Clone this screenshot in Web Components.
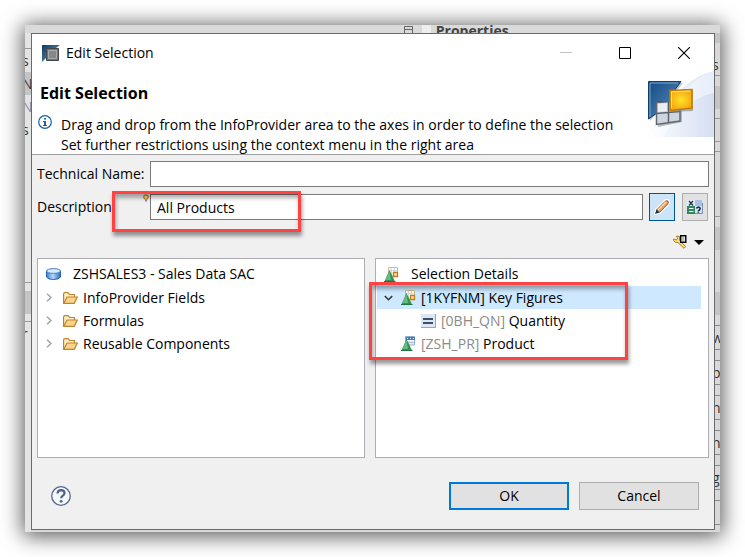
<!DOCTYPE html>
<html lang="en">
<head>
<meta charset="utf-8">
<meta name="viewport" content="width=device-width, initial-scale=1">
<title>Edit Selection</title>
<style>
  body {
    margin: 0;
    background: #fff;
    color: #000;
    font: 14px/20px "Open Sans", "Noto Sans", sans-serif;
  }
</style>
</head>
<body>
<app-frame>
  <edit-dialog heading="Edit Selection">
    <dialog-banner slot="banner" heading="Edit Selection">
      Drag and drop from the InfoProvider area to the axes in order to define the selection<br>
      Set further restrictions using the context menu in the right area
    </dialog-banner>
    <text-field label="Technical Name:"></text-field>
    <text-field label="Description:" value="All Products" hint marked>
      <icon-button icon="pencil" label="Edit text" active></icon-button>
      <icon-button icon="variable" label="Text variable"></icon-button>
    </text-field>
    <tree-tools></tree-tools>
    <split-panes>
      <tree-panel heading="ZSHSALES3 - Sales Data SAC" icon="database">
        <tree-row icon="folder" toggle="closed">InfoProvider Fields</tree-row>
        <tree-row icon="folder" toggle="closed">Formulas</tree-row>
        <tree-row icon="folder" toggle="closed">Reusable Components</tree-row>
      </tree-panel>
      <tree-panel heading="Selection Details" icon="figures" marked>
        <tree-row icon="figures" toggle="open" selected>[1KYFNM] Key Figures</tree-row>
        <tree-row icon="equals" key="[0BH_QN]" level="2">Quantity</tree-row>
        <tree-row icon="product" key="[ZSH_PR]">Product</tree-row>
      </tree-panel>
    </split-panes>
  </edit-dialog>
</app-frame>

<script>
const ICONS = {
  app: [18, 18, `
    <defs><linearGradient id="a" x2="1" y2="1"><stop stop-color="#0d3c66"/><stop offset="1" stop-color="#6d9cc4"/></linearGradient></defs>
    <path d="M0 1H18L14 4V15L4 14L0 18Z" fill="url(#a)"/>
    <path d="M4.500 4.500H16.500V16.500H4.500Z" fill="#707478" stroke="#43474b"/>
    <path d="M6.500 6.500H14.500V14.500H6.500Z" fill="#85888b" stroke="#a9acae"/>`],
  info: [14, 14, `
    <circle cx="7" cy="7" r="6.3" fill="#fff" stroke="#1c5fa3" stroke-width="1.2"/>
    <path d="M6 3H8V4.6H6ZM5 6H8V10H9V11H5V10H6V7H5Z" fill="#1c5fa3"/>`],
  minimize: [12, 12, `<path d="M0 5.5H12" stroke="#c4c4c4"/>`],
  maximize: [12, 12, `<path d="M.5 .5H11.5V11.5H.5Z" fill="none" stroke="#000"/>`],
  close: [12, 12, `<path d="M0 0L12 12M12 0L0 12" stroke="#000" stroke-width="1.1"/>`],
  art: [71, 66, `
    <defs>
      <linearGradient id="sky" x1="0" x2="1"><stop stop-color="#fff"/><stop offset="1" stop-color="#d5dff3"/></linearGradient>
      <linearGradient id="sky2" x1="0" x2="1"><stop stop-color="#fff" stop-opacity=".9"/><stop offset="1" stop-color="#e9effb" stop-opacity=".9"/></linearGradient>
      <linearGradient id="blue" x1="0" y1="0" x2="1" y2="1"><stop stop-color="#164b83"/><stop offset=".6" stop-color="#3d74a9"/><stop offset="1" stop-color="#8fb5d6"/></linearGradient>
      <radialGradient id="gold"><stop stop-color="#ffe22a"/><stop offset="1" stop-color="#f4ac12"/></radialGradient>
    </defs>
    <path d="M0 66C20 50 30 10 71 0V66Z" fill="url(#sky)"/>
    <path d="M32 32C42 16 55 5 71 0V22C50 26 36 40 20 66H0Q18 54 32 32Z" fill="url(#sky2)"/>
    <path d="M7 12H40L33 21H27V33L14 42L7 50Z" fill="#9aa3ad" opacity=".6"/>
    <path d="M5.500 10.500H38L31 20V31H14V42L5.500 48Z" fill="url(#blue)" stroke="#0f3f70"/>
    <path d="M7 46V12H35" fill="none" stroke="#7da5c8"/>
    <path d="M15 34L39 31V51L15 56Z" fill="#8e959d" opacity=".6"/>
    <path d="M13.500 31.500L37 30V50L13.500 53.500Z" fill="#cfd5df" stroke="#5f6873" stroke-width="1.500"/>
    <path d="M15 33L24 32V40L15 41Z" fill="#eceff5"/>
    <path d="M25.500 31V51.500M13.500 42.500L37 40.500" stroke="#596470" stroke-width="1.500"/>
    <path d="M28 20L50 19V40L28 41Z" fill="#80868c" opacity=".6"/>
    <path d="M27 19.500L49 18.500V37L27 39.500Z" fill="url(#gold)" stroke="#c87900" stroke-width="1.500"/>
    <path d="M28.500 37V20.800L47.500 20" fill="none" stroke="#ffe78a"/>`],
  bulb: [6, 8, `
    <circle cx="3" cy="3" r="2.200" fill="#ffe09a" stroke="#c7821e" stroke-width="1.200"/>
    <path d="M2 5.500H4V7L3 8L2 7Z" fill="#8391a5"/>`],
  pencil: [16, 16, `
    <path d="M1 15L2 10.500L11 1.500Q13 0 14.500 1.500Q16 3 14.500 5L5.500 14Z" fill="#fff" stroke="#fff" stroke-width="2"/>
    <path d="M2.500 11L11 2.500Q12.500 1 14 2.200Q15 3.500 13.700 5L5.500 13.500Z" fill="#e6a265" stroke="#9c5521"/>
    <path d="M4 11L12 3" stroke="#ffd9ae" stroke-width="1.500"/>
    <path d="M1 15L2.500 10.500L5.500 13.500Z" fill="#14324f"/>`],
  variable: [16, 16, `
    <path d="M0 1H8V8H0Z" fill="#e3ebf5"/><path d="M8 1H15V7H8Z" fill="#a9c2e3"/>
    <path d="M2 2L6 6.500M6 2L2 6.500" stroke="#23364f" stroke-width="1.300"/>
    <path d="M0 7H8V15H0Z" fill="#2e8a5b"/><path d="M2 9.500H6.500M2 12.500H6.500" stroke="#fff"/>
    <path d="M8 7H15V15H8Z" fill="#d4e2f3"/>
    <path d="M9.500 9.500Q10 8 11.700 8.300Q13.500 8.600 13 10Q12.700 11 11.400 11.800V12.500M11.400 13.300V14.700" fill="none" stroke="#182636" stroke-width="1.500"/>
    <path d="M8 14.500H15.500V4" fill="none" stroke="#7790b1"/>`],
  tools: [14, 14, `
    <path d="M3.500 1L6.500 1.500V5.500L12.700 11.500L11 13.300L5 7.500H2.500L.7 5.500V4L3.500 5L4.500 3.500Z" fill="#fbe07c" stroke="#a97c25"/>
    <path d="M7.700 .7H12.800V7.300H7.700Z" fill="#fff" stroke="#000" stroke-width="1.400"/>
    <path d="M9 3H11.500M9 5H11.500" stroke="#777"/>`],
  caret: [10, 5, `<path d="M0 0H10L5 5Z" fill="#000"/>`],
  closed: [6, 9, `<path d="M1 .8L5 4.500L1 8.200" fill="none" stroke="#a2a2a2" stroke-width="1.500"/>`],
  open: [9, 6, `<path d="M.8 1L4.500 4.700L8.200 1" fill="none" stroke="#333" stroke-width="1.600"/>`],
  database: [15, 12, `
    <defs><linearGradient id="d"><stop stop-color="#3a7dcb"/><stop offset=".45" stop-color="#b7d8f8"/><stop offset="1" stop-color="#2c6abd"/></linearGradient></defs>
    <path d="M.5 3V9Q2 11.500 7.500 11.500T14.500 9V3Z" fill="url(#d)" stroke="#2361af"/>
    <ellipse cx="7.500" cy="3" rx="7" ry="2.400" fill="#d7eafb" stroke="#4581c2"/>`],
  folder: [15, 12, `
    <path d="M.6 11V2Q.6 .7 2 .7H5L6.500 2.500H11.500V5" fill="#fff0c6" stroke="#bf822f" stroke-width="1.200"/>
    <path d="M.8 11.300L4 5H14.300L11.300 11.300Z" fill="#f9d489" stroke="#bf822f" stroke-width="1.200"/>`],
  figures: [15, 15, `
    <path d="M4.500 .5H13.500V9H4.500Z" fill="#fffdf5" stroke="#cdbb8d"/>
    <path d="M5 3.500H13M7.500 1V8M10.500 1V5" stroke="#ccd9e8"/>
    <path d="M9.500 5.500H13.500V9.500H9.500Z" fill="#ffe6ae" stroke="#c57a18" stroke-width="1.300"/>
    <path d="M5.500 3L11 14.500H.5Z" fill="#2f9355"/><path d="M5.500 4L7 13H1.500Z" fill="#66bb80"/>
    <path d="M0 14.500H11.500" stroke="#267346"/>`],
  product: [15, 15, `
    <path d="M4.500 .5H13.500V9H4.500Z" fill="#fffdf5" stroke="#8daad0"/>
    <path d="M5 1H14V4H5Z" fill="#3e77c2"/><path d="M6 2.500H13" stroke="#fff" stroke-dasharray="1 2"/>
    <path d="M8 5V9M11 5V9M6 6.500H13" stroke="#abc3e0"/>
    <path d="M5.500 3L11 14.500H.5Z" fill="#2f9355"/><path d="M5.500 4L7 13H1.500Z" fill="#66bb80"/>
    <path d="M0 14.500H11.500" stroke="#267346"/>`],
  equals: [15, 14, `
    <path d="M0 0H15V14H0Z" fill="#d9e7f8"/><path d="M0 13.500H14.500V0" fill="none" stroke="#8ba8d0"/>
    <path d="M2 5H12M2 9H12" stroke="#101d33" stroke-width="1.500"/>`],
  help: [20, 20, `
    <circle cx="10" cy="10" r="9.300" fill="#f5f6f8" stroke="#51688c" stroke-width="1.300"/>
    <path d="M6.500 7.500Q6.800 4.200 10 4.200Q13.500 4.300 13.500 7Q13.500 8.500 11.800 9.700Q10.300 10.700 10.200 12.300" fill="none" stroke="#4b628c" stroke-width="2.200"/>
    <circle cx="10.100" cy="15.300" r="1.400" fill="#4b628c"/>`],
  view: [9, 9, `<path d="M.5 .5H8.500V9M.5 9V.5M1 3.500H8" fill="none" stroke="#666"/>`]
};

class BaseElement extends HTMLElement {
  constructor() {
    super();
    this.attachShadow({ mode: "open" });
  }

  connectedCallback() {
    this.shadowRoot.innerHTML = /* html */`
    <style>:host, * { box-sizing: border-box; } ${this.constructor.styles}</style>
    ${this.render()}`;
  }

  attr(name) {
    return this.getAttribute(name) ?? "";
  }
}

class UiIcon extends BaseElement {
  static styles = /* css */`
    :host { display: inline-flex; flex: none; }
    svg { display: block; }
  `;

  render() {
    const [width, height, shapes] = ICONS[this.attr("name")];
    return `<svg width="${width}" height="${height}" viewBox="0 0 ${width} ${height}" aria-hidden="true">${shapes}</svg>`;
  }
}

class MarkBox extends BaseElement {
  static styles = /* css */`
    :host {
      position: absolute;
      border: 3px solid #ff4343;
      box-shadow: 1px 4px 4px #0006, inset 1px 4px 4px #0005;
      pointer-events: none;
    }
  `;

  render() {
    return "";
  }
}

/* The window behind the dialog: only its edges stay visible */
class AppFrame extends BaseElement {
  static styles = /* css */`
    :host {
      display: grid;
      min-height: 100vh;
      padding: 25px;
      overflow: hidden;
    }
    .back, ::slotted(*) {
      grid-area: 1 / 1;
    }
    .back {
      display: grid;
      grid-template: 8px 1fr / 6px 1fr 5px;
      background: #d8d8d8;
      box-shadow: 0 2px 20px 2px #000a;
      color: #444;
    }
    ::slotted(*) {
      margin: 8px 5px 2px 6px;
      z-index: 1;
    }
    .top {
      grid-column: 1 / -1;
      display: flex;
      gap: 9px;
      padding-left: 54.5%;
      background: #dadada;
    }
    .top ui-icon { padding-top: 1px; }
    .top i { width: 9px; background: #eee; }
    .top b { margin-left: -4px; line-height: 12px; }
    .left, .right {
      overflow: hidden;
      white-space: nowrap;
      color: #333;
    }
    .left { background: #e4e4e4; }
    .right { grid-column: 3; }
    .left div, .right div { height: 23px; line-height: 24px; text-indent: -3px; }
    .left .low { height: 8px; }
    .left .blank { height: 142px; }
    .left .dim { color: #7f8ca0; }
    .line { border-bottom: 1px solid #999; }
    .grey { background: #c4c4c4; }
    .right .gap { height: 10px; }
    .right .tall { height: 42px; }
    .right .field { height: 25px; margin-bottom: 10px; border: solid #888; border-width: 1px 0; }
    .right .field:last-child { margin-bottom: 0; }
  `;

  render() {
    return /* html */`
    <div class="back">
      <div class="top"><ui-icon name="view"></ui-icon><i></i><b>Properties</b></div>
      <div class="left">
        <div class="low"></div><div class="line low"></div>
        <div>s</div><div class="grey">N</div><div class="dim">N</div><div>s</div>
        <div class="line blank"></div><div class="low"></div>
        <div class="grey"></div><div class="line low"></div><div>r</div>
      </div>
      <div></div>
      <div class="right">
        <div class="grey gap"></div><div class="gap"></div>
        <div class="line">s</div><div class="gap"></div>
        <div class="grey"></div><div class="line gap"></div>
        <div class="line"></div><div class="line gap"></div>
        <div class="tall"></div><div class="line"></div>
        <div class="gap"></div><div class="grey"></div>
        <div class="tall"></div><div class="grey"></div><div class="gap"></div>
        <div class="field">w</div><div class="field">p</div>
        <div class="field">n</div><div class="field">n</div>
        <div class="field">g</div><div class="field"></div>
      </div>
    </div>
    <slot></slot>`;
  }
}

class EditDialog extends BaseElement {
  static styles = /* css */`
    :host {
      display: flex;
      flex-direction: column;
      background: #f0f0f0;
      border: 1px solid #6a6a6a;
    }
    header {
      display: flex;
      align-items: center;
      height: 37px;
      padding: 0 24px 0 10px;
      background: #fff;
    }
    header span { flex: 1; margin-left: 6px; }
    header button {
      display: flex;
      padding: 0;
      margin-left: 47px;
      border: 0;
      background: none;
    }
    main {
      flex: 1;
      display: flex;
      flex-direction: column;
      padding: 6px 5px 0;
      gap: 6px;
    }
    footer {
      display: flex;
      align-items: center;
      gap: 10px;
      padding: 24px 15px 19px 19px;
    }
    footer button {
      height: 28px;
      width: 120px;
      padding: 0;
      border: 1px solid #adadad;
      background: #e1e1e1;
      color: #000;
      font: inherit;
    }
    footer .ok { border: 2px solid #0078d7; }
    footer .help {
      display: flex;
      align-items: center;
      width: 20px;
      margin-right: auto;
      border: 0;
      background: none;
    }
  `;

  render() {
    return /* html */`
    <header>
      <ui-icon name="app"></ui-icon>
      <span>${this.attr("heading")}</span>
      <button aria-label="Minimize" disabled><ui-icon name="minimize"></ui-icon></button>
      <button aria-label="Maximize"><ui-icon name="maximize"></ui-icon></button>
      <button aria-label="Close"><ui-icon name="close"></ui-icon></button>
    </header>
    <slot name="banner"></slot>
    <main><slot></slot></main>
    <footer>
      <button class="help" aria-label="Help"><ui-icon name="help"></ui-icon></button>
      <button class="ok">OK</button>
      <button>Cancel</button>
    </footer>`;
  }
}

class DialogBanner extends BaseElement {
  static styles = /* css */`
    :host {
      display: flex;
      align-items: flex-start;
      height: 84px;
      background: #fff;
      border-bottom: 1px solid #a0a0a0;
    }
    .text { flex: 1; padding: 12px 0 0 8px; white-space: nowrap; }
    h1 { margin: 0 0 12px; font-size: 16px; line-height: 20px; }
    .message { display: flex; align-items: flex-start; gap: 9px; margin-left: -2px; }
    .art { width: 0; display: flex; justify-content: flex-end; }
  `;

  render() {
    return /* html */`
    <div class="text">
      <h1>${this.attr("heading")}</h1>
      <div class="message"><ui-icon name="info"></ui-icon><div><slot></slot></div></div>
    </div>
    <div class="art"><ui-icon name="art"></ui-icon></div>`;
  }
}

class TextField extends BaseElement {
  static styles = /* css */`
    :host {
      position: relative;
      display: flex;
      align-items: center;
      gap: 6px;
    }
    label { width: 107px; white-space: nowrap; }
    input {
      flex: 1;
      min-width: 0;
      height: 26px;
      padding: 0 6px;
      border: 1px solid #7a7a7a;
      background: #fff;
      color: #000;
      font: inherit;
    }
    .hint { position: absolute; left: 106px; top: 1px; }
    mark-box { left: 75px; top: -2px; width: 189px; height: 41px; }
  `;

  render() {
    return /* html */`
    <label for="field">${this.attr("label")}</label>
    <input id="field" type="text" value="${this.attr("value")}">
    <slot></slot>
    ${this.hasAttribute("hint") ? `<ui-icon class="hint" name="bulb"></ui-icon>` : ""}
    ${this.hasAttribute("marked") ? "<mark-box></mark-box>" : ""}`;
  }
}

class IconButton extends BaseElement {
  static styles = /* css */`
    :host { display: block; }
    :host(:last-child) { margin: 0 1px; }
    button {
      display: flex;
      align-items: center;
      justify-content: center;
      width: 26px;
      height: 28px;
      padding: 0;
      border: 1px solid #adadad;
      background: #e1e1e1;
    }
    :host([active]) button { border-color: #005499; background: #cce4f7; }
  `;

  render() {
    return `<button aria-label="${this.attr("label")}"><ui-icon name="${this.attr("icon")}"></ui-icon></button>`;
  }
}

class TreeTools extends BaseElement {
  static styles = /* css */`
    :host { display: flex; justify-content: flex-end; padding: 8px 5px 3px; }
    button {
      display: flex;
      align-items: center;
      gap: 7px;
      padding: 0;
      border: 0;
      background: none;
    }
  `;

  render() {
    return `<button aria-label="View options"><ui-icon name="tools"></ui-icon><ui-icon name="caret"></ui-icon></button>`;
  }
}

class SplitPanes extends BaseElement {
  static styles = /* css */`
    :host {
      flex: 1;
      display: grid;
      grid-template-columns: 328fr 334fr;
      gap: 10px;
    }
  `;

  render() {
    return "<slot></slot>";
  }
}

class TreePanel extends BaseElement {
  static styles = /* css */`
    :host {
      position: relative;
      min-height: 200px;
      padding: 3px 7px 3px 1px;
      border: 1px solid #abadb3;
      background: #fff;
    }
    .heading {
      display: flex;
      align-items: center;
      gap: 12px;
      height: 24px;
      padding-left: 7px;
    }
    mark-box { left: -7px; top: 23px; width: 259px; height: 78px; }
  `;

  render() {
    return /* html */`
    <div class="heading"><ui-icon name="${this.attr("icon")}"></ui-icon><span>${this.attr("heading")}</span></div>
    <slot></slot>
    ${this.hasAttribute("marked") ? "<mark-box></mark-box>" : ""}`;
  }
}

class TreeRow extends BaseElement {
  static styles = /* css */`
    :host {
      display: flex;
      align-items: center;
      height: 23px;
      gap: 5px;
      padding-left: 7px;
      white-space: nowrap;
    }
    :host([level="2"]) { padding-left: 27px; }
    :host([selected]) { background: #cde8ff; }
    button {
      display: flex;
      width: 12px;
      padding: 0;
      border: 0;
      background: none;
    }
    .spacer { width: 12px; }
    .key { color: #8a8a8a; }
  `;

  render() {
    const toggle = this.attr("toggle");
    return /* html */`
    ${toggle
      ? `<button aria-label="Toggle" aria-expanded="${toggle === "open"}"><ui-icon name="${toggle}"></ui-icon></button>`
      : `<span class="spacer"></span>`}
    <ui-icon name="${this.attr("icon")}"></ui-icon>
    <span>${this.hasAttribute("key") ? `<span class="key">${this.attr("key")}</span> ` : ""}<slot></slot></span>`;
  }
}

customElements.define("ui-icon", UiIcon);
customElements.define("mark-box", MarkBox);
customElements.define("app-frame", AppFrame);
customElements.define("edit-dialog", EditDialog);
customElements.define("dialog-banner", DialogBanner);
customElements.define("text-field", TextField);
customElements.define("icon-button", IconButton);
customElements.define("tree-tools", TreeTools);
customElements.define("split-panes", SplitPanes);
customElements.define("tree-panel", TreePanel);
customElements.define("tree-row", TreeRow);
</script>
</body>
</html>
